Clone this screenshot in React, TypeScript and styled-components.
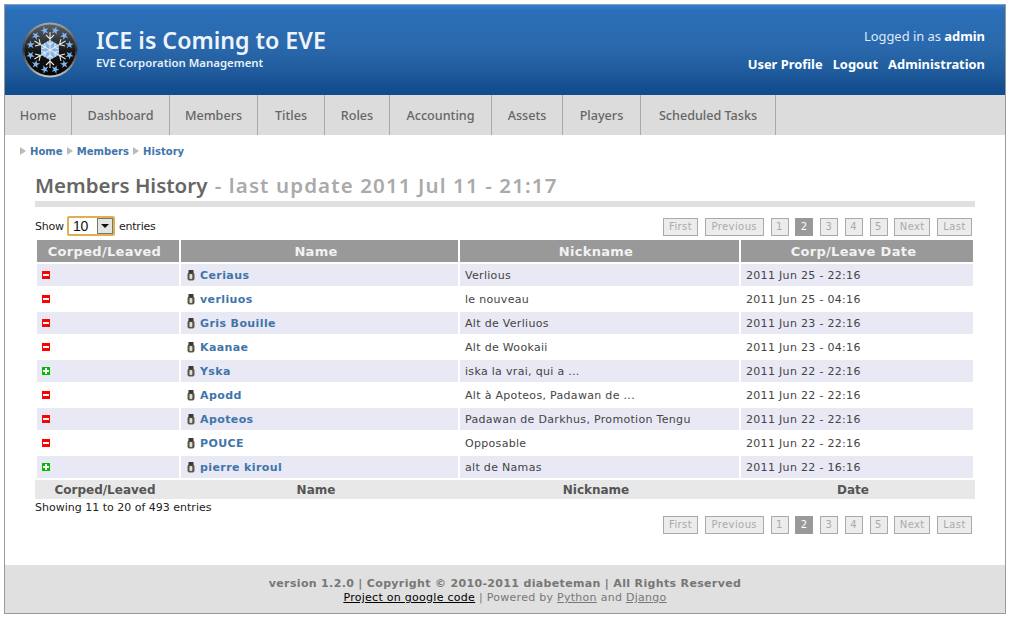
import React from "react";
import styled, { createGlobalStyle } from "styled-components";

const Global = createGlobalStyle`
  html, body { margin: 0; padding: 0; background: #fff; }
  body { font-family: "DejaVu Sans", Verdana, sans-serif; font-size: 11px; color: #333; }
`;
const Page = styled.div`
  width: 1009px; height: 618px; box-sizing: border-box; padding: 4px 3px 4px 4px;
`;
const Frame = styled.div`
  height: 100%; box-sizing: border-box; border: 1px solid #999;
  display: flex; flex-direction: column; background: #fff;
`;
const Header = styled.header`
  height: 90px; flex: none; box-sizing: border-box; padding: 0 20px 0 17px;
  background: linear-gradient(180deg, #2a7fda 0, #2a6fb8 6%, #2a69ad 45%, #1f5b9c 75%, #134e8e 92%, #124d8d 100%);
  display: flex; justify-content: space-between; color: #fff;
  font-family: "Noto Sans", "Open Sans", sans-serif;
`;
const Brand = styled.div`
  display: flex; align-items: flex-start; padding-top: 17px; gap: 18px;
`;
const BrandText = styled.div`
  display: flex; flex-direction: column; padding-top: 3px;
`;
const Title = styled.div`
  font-size: 23.2px; line-height: 30px; font-weight: 600; color: #eef4fb; white-space: nowrap;
`;
const Subtitle = styled.div`
  font-size: 11.4px; line-height: 16px; font-weight: 600; color: #e8f0f8; margin-top: 0;
`;
const UserBox = styled.div`
  display: flex; flex-direction: column; align-items: flex-end; padding-top: 21px;
  font-size: 12.9px; color: #dfe9f4;
`;
const Logged = styled.div`
  line-height: 20px;
  b { color: #fff; font-weight: 700; }
`;
const UserLinks = styled.div`
  display: flex; gap: 10px; margin-top: 8px; line-height: 20px; font-weight: 700; color: #fff;
`;
const Nav = styled.nav`
  height: 40px; flex: none; background: #dcdcdc; display: flex;
  font-family: "Noto Sans", "Open Sans", sans-serif; font-size: 12.6px; font-weight: 500; color: #666;
`;
const NavItem = styled.div<{ $w: number }>`
  width: ${(p) => p.$w}px; box-sizing: border-box; border-right: 1px solid #aaa;
  display: flex; align-items: center; justify-content: center;
`;
const Crumbs = styled.div`
  display: flex; align-items: center; height: 12px; margin: 10px 0 0 15px;
  font-size: 10px; font-weight: 700; color: #3f75ab; letter-spacing: 0.05px;
`;
const CrumbArrow = styled.span`
  width: 0; height: 0; border-left: 6px solid #bbb; border-top: 4px solid transparent;
  border-bottom: 4px solid transparent; margin-right: 4px;
`;
const CrumbText = styled.span`
  margin-right: 4px;
`;
const Content = styled.main`
  flex: 1; padding: 0 30px; display: flex; flex-direction: column;
`;
const Heading = styled.h1`
  margin: 14px 0 0; height: 30px; line-height: 28px; font-family: "Noto Sans", "Open Sans", sans-serif;
  font-size: 20.5px; font-weight: 600; color: #666; border-bottom: 6px solid #e0e0e0; box-sizing: content-box;
  white-space: nowrap;
  span { color: #aaa; letter-spacing: 1.12px; margin-left: 2px; }
`;
const TopBar = styled.div`
  display: flex; justify-content: space-between; align-items: flex-start; height: 22px; margin-top: 9px;
`;
const Show = styled.div`
  display: flex; align-items: center; gap: 3px; font-size: 11px; color: #222; height: 20px;
  letter-spacing: -0.2px;
`;
const FakeSelect = styled.div`
  width: 48px; height: 20px; box-sizing: border-box; border: 2px solid #e0b050; border-radius: 2px;
  display: flex; background: #fff; font-family: "Liberation Sans", sans-serif; font-size: 14px; color: #111;
  margin-right: 1px;
`;
const SelectVal = styled.div`
  flex: 1; padding-left: 4px; line-height: 16px;
`;
const SelectBtn = styled.div`
  width: 16px; background: #e4e4e4; border: 1px solid #777; box-sizing: border-box;
  display: flex; align-items: center; justify-content: center;
  &::after { content: ""; border-top: 4px solid #111; border-left: 4px solid transparent; border-right: 4px solid transparent; }
`;
const Pager = styled.div`
  display: flex; gap: 6.75px; padding-right: 3px;
`;
const TopPager = styled.div`
  margin-top: 2px;
`;
const PageBtn = styled.div<{ $active?: boolean; $w: number }>`
  width: ${(p) => p.$w}px; height: 18px; box-sizing: border-box; border: 1px solid ${(p) => (p.$active ? "#999" : "#aaa")};
  background: ${(p) => (p.$active ? "#999" : "#ececec")}; color: ${(p) => (p.$active ? "#fff" : "#aaa")};
  font-size: 10px; line-height: 16px; letter-spacing: 0.4px; text-align: center;
`;
const Table = styled.table`
  border-collapse: separate; border-spacing: 2px; width: 940px; table-layout: fixed;
`;
const Th = styled.th`
  height: 22px; padding: 0 7px 0 0; background: #999; color: #f2f2f2; font-size: 13px; font-weight: 700; letter-spacing: 0.3px;
`;
const Row = styled.tr<{ $odd: boolean }>`
  td { background: ${(p) => (p.$odd ? "#e9e9f5" : "#fff")}; }
`;
const Td = styled.td`
  height: 22px; padding: 0 0 0 5px; color: #444; white-space: nowrap; overflow: hidden; font-size: 11px; letter-spacing: 0.31px;
`;
const NameLink = styled.span`
  display: inline-flex; align-items: center; gap: 5px; margin-left: 1px; color: #3f75ab; font-weight: 700;
  vertical-align: middle; letter-spacing: 0.4px;
`;
const FootBar = styled.div`
  display: grid; grid-template-columns: 140px 282px 278px 236px; height: 19px; background: #e8e8e8;
  align-items: center; font-size: 12px; font-weight: 700; color: #555; text-align: center;
`;
const Info = styled.div`
  margin-top: 2px; font-size: 11px; color: #222; line-height: 14px;
`;
const BottomPager = styled.div`
  display: flex; justify-content: flex-end; margin-top: 1px;
`;
const Footer = styled.footer`
  height: 48px; flex: none; background: #e0e0e0; text-align: center; color: #777; font-size: 11px; padding-top: 12px; box-sizing: border-box;
  line-height: 14px; letter-spacing: 0.28px;
`;
const FootStrong = styled.div`
  font-weight: 700; line-height: 14px; letter-spacing: 0.34px;
`;
const Link = styled.span<{ $dark?: boolean }>`
  text-decoration: underline; color: ${(p) => (p.$dark ? "#000" : "#777")};
`;

function Logo() {
  const stars = Array.from({ length: 12 }, (_, i) => i * 30 + 15);
  const arms = [0, 60, 120, 180, 240, 300];
  const star = "M0 -4 L1 -1 L4 -1 L1.6 .8 L2.5 4 L0 2 L-2.5 4 L-1.6 .8 L-4 -1 L-1 -1Z";
  return (
    <svg width="56" height="56" viewBox="-28 -28 56 56">
      <defs>
        <linearGradient id="rim" x1="0" y1="0" x2="0" y2="1">
          <stop offset="0" stopColor="#a8a8a8" />
          <stop offset="0.5" stopColor="#333" />
          <stop offset="1" stopColor="#c8c8c8" />
        </linearGradient>
        <linearGradient id="disc" x1="0" y1="0" x2="0" y2="1">
          <stop offset="0" stopColor="#5a6068" />
          <stop offset="0.55" stopColor="#141414" />
          <stop offset="1" stopColor="#050505" />
        </linearGradient>
      </defs>
      <circle r="27.5" fill="url(#rim)" />
      <circle r="25.5" fill="url(#disc)" />
      <g fill="#7fb4ee">
        <path d="M-9 -5 L0 -10 L9 -5 L9 5 L0 10 L-9 5Z" />
        {stars.map((a) => (
          <path key={a} transform={`rotate(${a}) translate(0 -20.5)`} d={star} />
        ))}
      </g>
      <g stroke="#e6e5de" strokeWidth="1.1" fill="none">
        {arms.map((a) => (
          <path key={a} transform={`rotate(${a})`} d="M0 0V-18M-4 -15L0 -11L4 -15M-3 -8L0 -5L3 -8" />
        ))}
      </g>
    </svg>
  );
}

function Minus() {
  return (
    <svg width="8" height="8" viewBox="0 0 8 8" style={{ display: "block" }}>
      <rect width="8" height="8" fill="#f00" />
      <rect x="1" y="3" width="6" height="2" fill="#fff" />
    </svg>
  );
}
function Plus() {
  return (
    <svg width="8" height="8" viewBox="0 0 8 8" style={{ display: "block" }}>
      <rect width="8" height="8" fill="#0b0" />
      <path d="M1 3h2V1h2v2h2v2H5v2H3V5H1z" fill="#fff" />
    </svg>
  );
}
function Pawn() {
  return (
    <svg width="8" height="11" viewBox="0 0 8 11">
      <rect x="0.5" y="2.5" width="7" height="8" rx="2" fill="#5c574e" />
      <rect x="1.5" y="0" width="5" height="3.5" fill="#3e3a33" />
      <rect x="2.5" y="4" width="2.8" height="5" rx="1" fill="#e0dccf" />
    </svg>
  );
}

const rows: [boolean, string, string, string][] = [
  [false, "Ceriaus", "Verlious", "2011 Jun 25 - 22:16"],
  [false, "verliuos", "le nouveau", "2011 Jun 25 - 04:16"],
  [false, "Gris Bouille", "Alt de Verliuos", "2011 Jun 23 - 22:16"],
  [false, "Kaanae", "Alt de Wookaii", "2011 Jun 23 - 04:16"],
  [true, "Yska", "iska la vrai, qui a ...", "2011 Jun 22 - 22:16"],
  [false, "Apodd", "Alt à Apoteos, Padawan de ...", "2011 Jun 22 - 22:16"],
  [false, "Apoteos", "Padawan de Darkhus, Promotion Tengu", "2011 Jun 22 - 22:16"],
  [false, "POUCE", "Opposable", "2011 Jun 22 - 22:16"],
  [true, "pierre kiroul", "alt de Namas", "2011 Jun 22 - 16:16"],
];
const nav: [string, number][] = [
  ["Home", 67], ["Dashboard", 98], ["Members", 88], ["Titles", 67], ["Roles", 65],
  ["Accounting", 102], ["Assets", 71], ["Players", 78], ["Scheduled Tasks", 135],
];
const pageButtons: [string, number][] = [
  ["First", 35], ["Previous", 59], ["1", 18], ["2", 18], ["3", 18], ["4", 18], ["5", 18], ["Next", 36], ["Last", 35],
];
function Pages() {
  return (
    <Pager>
      {pageButtons.map(([t, w]) => (
        <PageBtn key={t} $w={w} $active={t === "2"}>{t}</PageBtn>
      ))}
    </Pager>
  );
}

export default function App() {
  return (
    <Page>
      <Global />
      <Frame>
        <Header>
          <Brand>
            <Logo />
            <BrandText>
              <Title>ICE is Coming to EVE</Title>
              <Subtitle>EVE Corporation Management</Subtitle>
            </BrandText>
          </Brand>
          <UserBox>
            <Logged>Logged in as <b>admin</b></Logged>
            <UserLinks>
              <span>User Profile</span>
              <span>Logout</span>
              <span>Administration</span>
            </UserLinks>
          </UserBox>
        </Header>
        <Nav>
          {nav.map(([t, w]) => (
            <NavItem key={t} $w={w}>{t}</NavItem>
          ))}
        </Nav>
        <Crumbs>
          <CrumbArrow /><CrumbText>Home</CrumbText>
          <CrumbArrow /><CrumbText>Members</CrumbText>
          <CrumbArrow /><CrumbText>History</CrumbText>
        </Crumbs>
        <Content>
          <Heading>Members History <span>- last update 2011 Jul 11 - 21:17</span></Heading>
          <TopBar>
            <Show>
              Show
              <FakeSelect>
                <SelectVal>10</SelectVal>
                <SelectBtn />
              </FakeSelect>
              entries
            </Show>
            <TopPager><Pages /></TopPager>
          </TopBar>
          <Table>
            <colgroup>
              <col style={{ width: 142 }} />
              <col style={{ width: 277 }} />
              <col style={{ width: 279 }} />
              <col style={{ width: 232 }} />
            </colgroup>
            <thead>
              <tr>
                <Th>Corped/Leaved</Th>
                <Th>Name</Th>
                <Th>Nickname</Th>
                <Th>Corp/Leave Date</Th>
              </tr>
            </thead>
            <tbody>
              {rows.map((r, i) => (
                <Row key={i} $odd={i % 2 === 0}>
                  <Td>{r[0] ? <Plus /> : <Minus />}</Td>
                  <Td>
                    <NameLink><Pawn />{r[1]}</NameLink>
                  </Td>
                  <Td>{r[2]}</Td>
                  <Td>{r[3]}</Td>
                </Row>
              ))}
            </tbody>
          </Table>
          <FootBar>
            <span>Corped/Leaved</span>
            <span>Name</span>
            <span>Nickname</span>
            <span>Date</span>
          </FootBar>
          <Info>Showing 11 to 20 of 493 entries</Info>
          <BottomPager><Pages /></BottomPager>
        </Content>
        <Footer>
          <FootStrong>version 1.2.0 | Copyright © 2010-2011 diabeteman | All Rights Reserved</FootStrong>
          <div>
            <Link $dark>Project on google code</Link> | Powered by <Link>Python</Link> and <Link>Django</Link>
          </div>
        </Footer>
      </Frame>
    </Page>
  );
}
